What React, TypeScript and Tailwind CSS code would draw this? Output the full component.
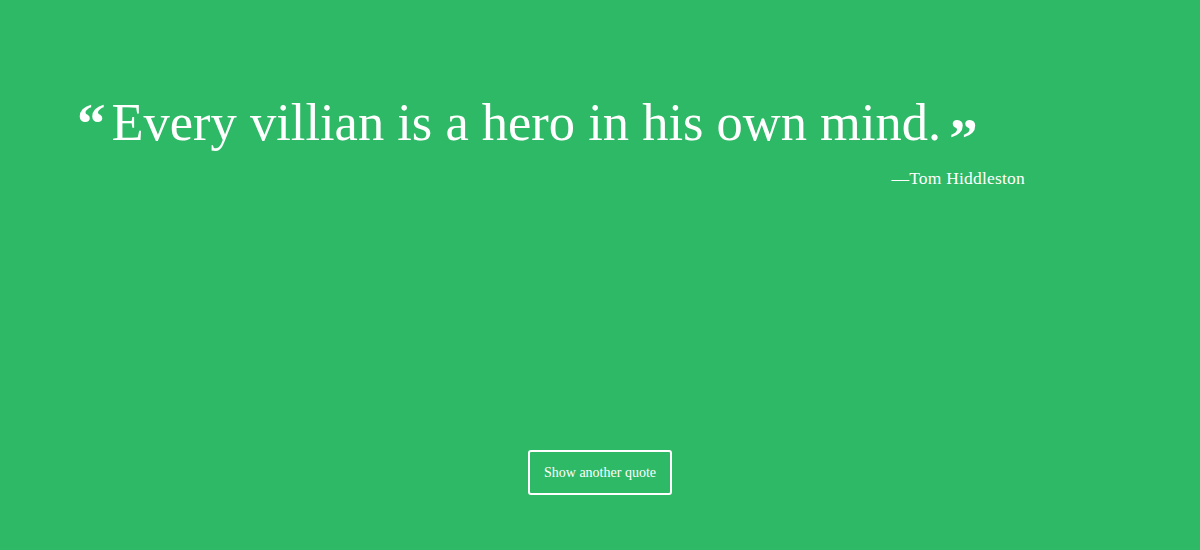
export default function App() {
  return (
    <div className="flex h-[550px] w-full flex-col bg-[#2eb966] text-white" style={{ fontFamily: "'Liberation Serif', 'DejaVu Serif', serif" }}>
      <div className="pl-[77px] pr-[175px] pt-[90px]">
        <blockquote className="flex h-[64px] items-start whitespace-nowrap">
          <span className="mr-[6px] mt-[16px] text-[57px] font-bold leading-[36px]">&ldquo;</span>
          <span className="text-[52.5px] leading-[64px]">Every villian is a hero in his own mind.</span>
          <span className="ml-[8px] mt-[31px] text-[57px] font-bold leading-[36px]">&rdquo;</span>
        </blockquote>
        <p className="mt-[12px] text-right text-[17.5px] leading-[24px] tracking-[0.2px]">&mdash;Tom Hiddleston</p>
      </div>
      <div className="mt-auto flex justify-center pb-[55px]">
        <button className="h-[45px] rounded-[3px] border-2 border-white px-[14px] text-[14px] text-white">Show another quote</button>
      </div>
    </div>
  );
}
